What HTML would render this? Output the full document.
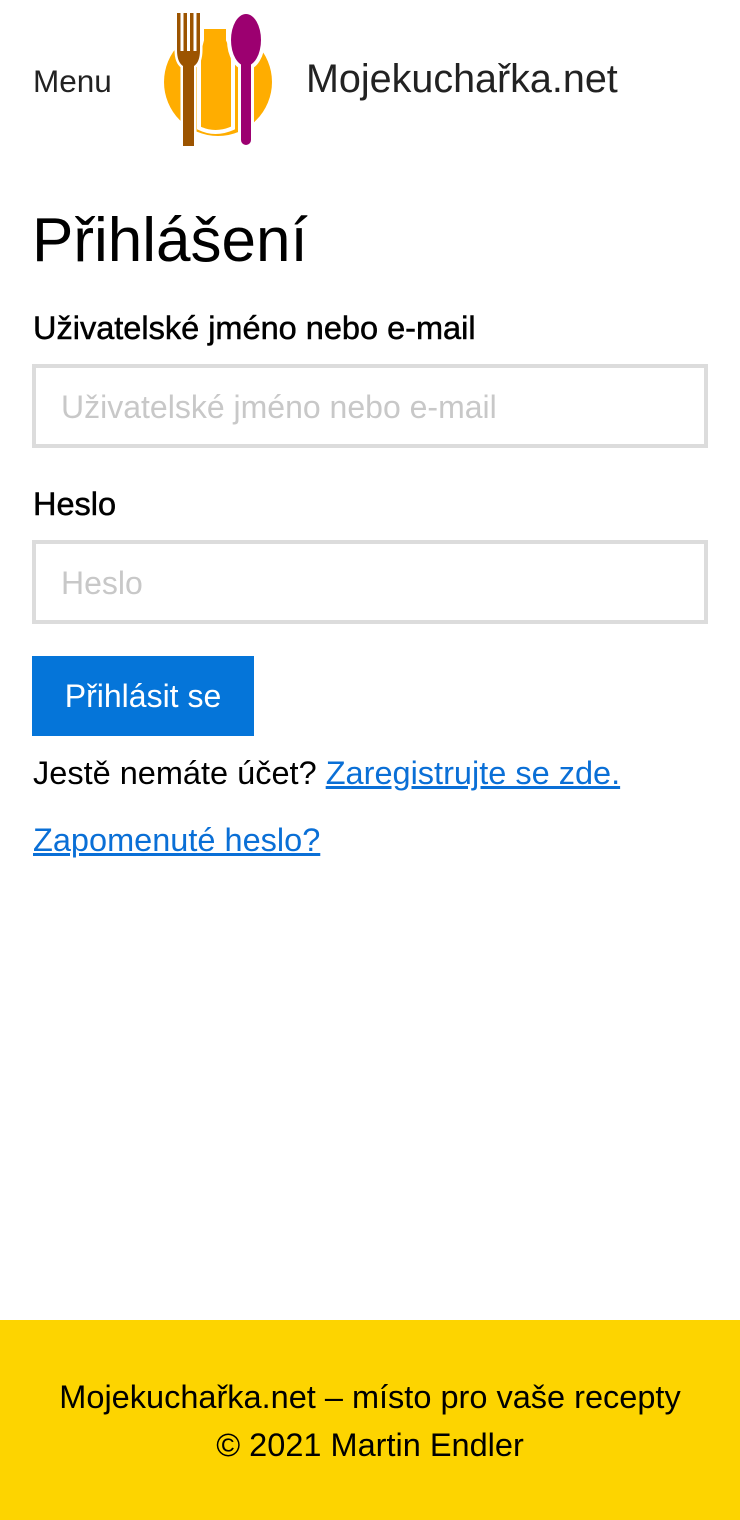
<!DOCTYPE html>
<html><head><meta charset="utf-8"><style>
*{margin:0;padding:0;box-sizing:border-box}
body{width:740px;height:1520px;position:relative;font-family:"Liberation Sans",sans-serif;background:#fff;color:#000}
.a{position:absolute;white-space:nowrap}
.inp{position:absolute;left:32px;width:676px;height:84px;border:4px solid #dcdcdc;background:#fff}
.inp span{position:absolute;left:25px;top:21px;font-size:32px;color:#c8c8c8}
.lbl{-webkit-text-stroke:0.5px #000}
a{color:#0a6fd6;text-decoration:underline}
</style></head><body>
<div class="a" style="left:33px;top:63px;font-size:31.5px;color:#222">Menu</div>
<svg class="a" style="left:150px;top:0" width="140" height="160" viewBox="150 0 140 160">
<circle cx="218" cy="82" r="54" fill="#ffad00"/>
<path d="M202 40 L202 27 L228 27 L228 40 Q233 50 233 62 L233 128 Q215 136 199 128 L199 62 Q199 50 202 40Z" fill="#ffad00" stroke="#fff" stroke-width="4"/>
<g fill="#9c5400" stroke="#fff" stroke-width="5" stroke-linejoin="round">
<path d="M177 13 H200 V50 Q200 62 194 66 V146 H183 V66 Q177 62 177 50Z"/>
</g>
<g fill="#9c5400">
<path d="M177 13 H200 V50 Q200 62 194 66 V146 H183 V66 Q177 62 177 50Z"/>
</g>
<g fill="#fff">
<rect x="180.5" y="13" width="3" height="38"/>
<rect x="187" y="13" width="3" height="38"/>
<rect x="193.5" y="13" width="3" height="38"/>
</g>
<g stroke="#fff" stroke-width="4" fill="#fff">
<ellipse cx="246" cy="40" rx="17" ry="28"/>
<rect x="240" y="60" width="12" height="88" rx="5"/>
</g>
<ellipse cx="246" cy="40" rx="15" ry="26" fill="#9c0070"/>
<rect x="241" y="55" width="10" height="90" rx="5" fill="#9c0070"/>
</svg>
<div class="a" style="left:306px;top:57px;font-size:39.5px;color:#222">Mojekuchařka.net</div>
<div class="a" style="left:32px;top:205px;font-size:62px">Přihlášení</div>
<div class="a lbl" style="left:33px;top:310px;font-size:32.5px">Uživatelské jméno nebo e-mail</div>
<div class="inp" style="top:364px"><span>Uživatelské jméno nebo e-mail</span></div>
<div class="a lbl" style="left:33px;top:486px;font-size:32.5px">Heslo</div>
<div class="inp" style="top:540px"><span>Heslo</span></div>
<div class="a" style="left:32px;top:656px;width:222px;height:80px;background:#0575d9;color:#fff;font-size:32px;text-align:center;line-height:80px">Přihlásit se</div>
<div class="a" style="left:33px;top:755px;font-size:32.5px">Jestě nemáte účet? <a>Zaregistrujte se zde.</a></div>
<div class="a" style="left:33px;top:822px;font-size:32.5px"><a>Zapomenuté heslo?</a></div>
<div class="a" style="left:0;top:1320px;width:740px;height:200px;background:#fdd400;text-align:center;font-size:32.5px;line-height:48px;padding-top:53px">Mojekuchařka.net – místo pro vaše recepty<br>© 2021 Martin Endler</div>
</body></html>
